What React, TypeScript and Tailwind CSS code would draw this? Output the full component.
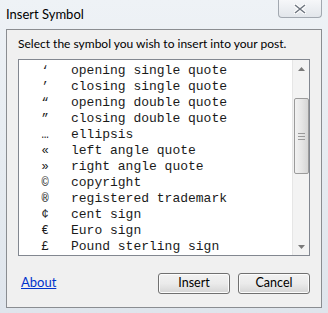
import React from 'react';

const symbols: [string, string][] = [
  ['\u2018', 'opening single quote'],
  ['\u2019', 'closing single quote'],
  ['\u201C', 'opening double quote'],
  ['\u201D', 'closing double quote'],
  ['\u2026', 'ellipsis'],
  ['\u00AB', 'left angle quote'],
  ['\u00BB', 'right angle quote'],
  ['\u00A9', 'copyright'],
  ['\u00AE', 'registered trademark'],
  ['\u00A2', 'cent sign'],
  ['\u20AC', 'Euro sign'],
  ['\u00A3', 'Pound sterling sign'],
];

function Scrollbar() {
  return (
    <div className="w-[17px] h-full bg-[#f3f3f3] border-l border-[#e6e6e6] flex flex-col items-center">
      <div className="h-[17px] w-full flex items-center justify-center">
        <svg width="7" height="4" viewBox="0 0 7 4">
          <path d="M0 4 L3.5 0 L7 4 Z" fill="#7a7a7a" />
        </svg>
      </div>
      <div className="h-[21px]" />
      <div className="w-[15px] h-[76px] rounded-[2px] border border-[#9b9b9b] bg-gradient-to-r from-[#f2f2f2] via-[#e6e6e6] to-[#d6d6d6] flex flex-col items-center justify-center gap-[2px]">
        <div className="w-[7px] h-px bg-[#9a9a9a]" />
        <div className="w-[7px] h-px bg-[#9a9a9a]" />
        <div className="w-[7px] h-px bg-[#9a9a9a]" />
      </div>
      <div className="flex-1" />
      <div className="h-[17px] w-full flex items-center justify-center">
        <svg width="7" height="4" viewBox="0 0 7 4">
          <path d="M0 0 L3.5 4 L7 0 Z" fill="#7a7a7a" />
        </svg>
      </div>
    </div>
  );
}

function Button({ label }: { label: string }) {
  return (
    <button className="w-[72px] h-[21px] rounded-[3px] border border-[#707070] bg-gradient-to-b from-[#f2f2f2] via-[#ebebeb] to-[#d5d5d5] text-[12.5px] text-black shadow-[inset_0_0_0_1px_#fcfcfc] leading-none">
      {label}
    </button>
  );
}

export default function App() {
  return (
    <div
      className="w-[328px] h-[313px] bg-gradient-to-b from-[#eef2f6] to-[#dfe5ec] flex flex-col px-[6px] pb-[5px]"
      style={{ fontFamily: '"Segoe UI", Lato, "Noto Sans", sans-serif' }}
    >
      <div className="h-[29px] flex items-start justify-between">
        <div className="pt-[5px] text-[13px] text-black">Insert Symbol</div>
        <div className="w-[44px] h-[18px] rounded-b-[4px] border border-t-0 border-[#a2a8b0] bg-gradient-to-b from-[#f6f7f9] to-[#e2e6eb] flex items-center justify-center">
          <svg width="12" height="10" viewBox="0 0 12 10">
            <path d="M1 1 L11 9 M11 1 L1 9" stroke="#fff" strokeWidth="3.4" strokeLinecap="square" />
            <path d="M1 1 L11 9 M11 1 L1 9" stroke="#6f7680" strokeWidth="1.6" />
          </svg>
        </div>
      </div>
      <div className="flex-1 bg-[#f0f0f0] border border-[#8a8d91] flex flex-col px-[11px]">
        <div className="pt-[5px] h-[29px] text-[12px] text-black whitespace-nowrap">
          Select the symbol you wish to insert into your post.
        </div>
        <div className="h-[197px] bg-white border border-[#828790] flex">
          <div className="flex-1 overflow-hidden pt-[3px]">
            {symbols.map(([sym, name]) => (
              <div
                key={name}
                className="h-[16px] flex items-center text-[13px] text-[#1a1a1a]"
                style={{ fontFamily: '"Liberation Mono", "Courier New", monospace' }}
              >
                <span className="w-[52px] text-center text-[12px]">{sym}</span>
                <span className="whitespace-pre">{name}</span>
              </div>
            ))}
          </div>
          <Scrollbar />
        </div>
        <div className="flex-1 flex items-center justify-between pl-[3px] pt-[3px]">
          <a href="#" className="text-[13px] text-[#0033cc] underline">
            About
          </a>
          <div className="flex gap-[8px]">
            <Button label="Insert" />
            <Button label="Cancel" />
          </div>
        </div>
      </div>
    </div>
  );
}
